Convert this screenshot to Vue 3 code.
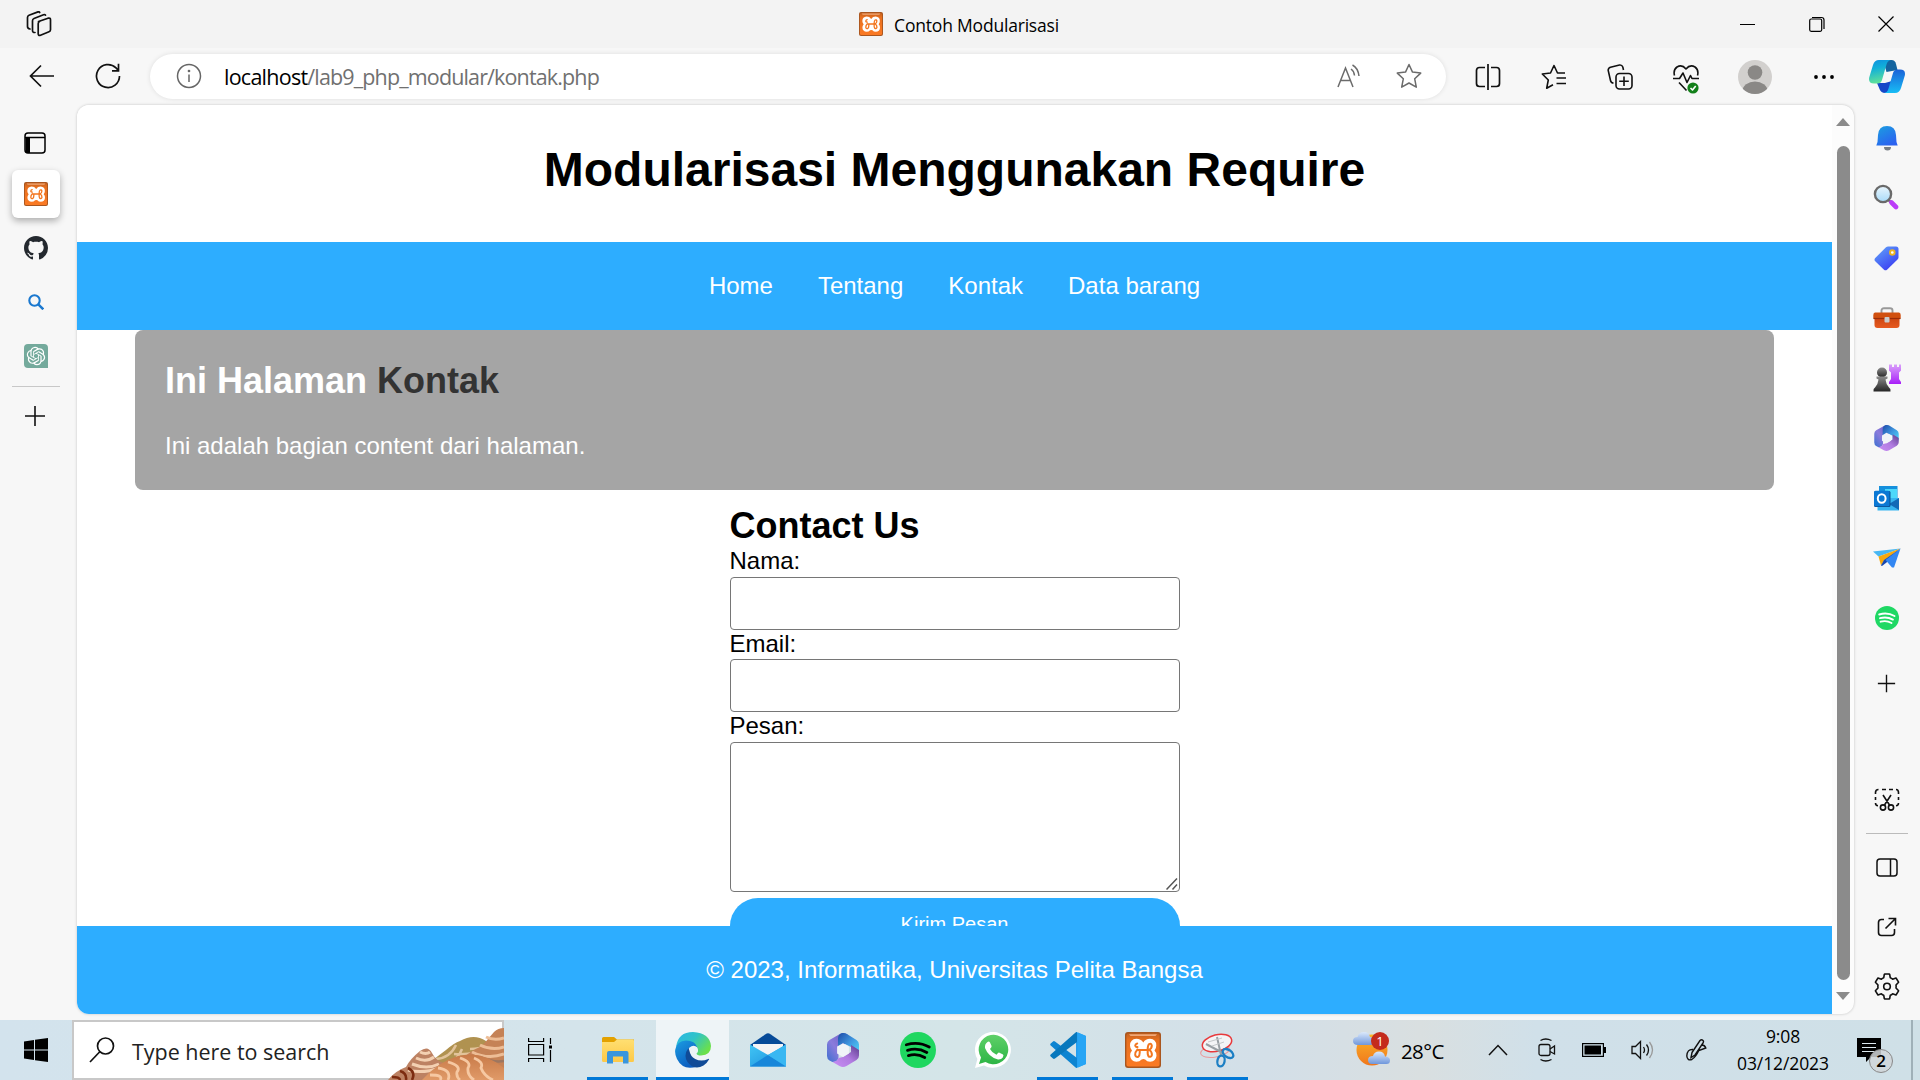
<script setup>
const navLinks = ['Home', 'Tentang', 'Kontak', 'Data barang']
</script>

<template>
  <div class="screen">
    <svg class="defs" width="0" height="0" aria-hidden="true">
      <defs>
        <linearGradient id="xg" x1="0" y1="0" x2="0" y2="1"><stop offset="0" stop-color="#c4611f" /><stop offset=".2" stop-color="#e8701f" /><stop offset="1" stop-color="#fb7a24" /></linearGradient>
        <linearGradient id="m1" x1="0" y1="1" x2="1" y2="0"><stop offset="0" stop-color="#3b6fd0" /><stop offset=".45" stop-color="#8a7bdc" /><stop offset="1" stop-color="#6a5cc0" /></linearGradient>
        <linearGradient id="m2" x1="0" y1="0" x2="1" y2="1"><stop offset="0" stop-color="#1d4aa8" /><stop offset=".5" stop-color="#3f98e0" /><stop offset="1" stop-color="#52e0fb" /></linearGradient>
        <linearGradient id="m3" x1="0" y1="1" x2="1" y2="0"><stop offset="0" stop-color="#c98df5" /><stop offset=".5" stop-color="#b07be0" /><stop offset="1" stop-color="#5a3c8c" /></linearGradient>
        <linearGradient id="e1" x1="0" y1="0" x2="1" y2=".6"><stop offset="0" stop-color="#2bb6e8" /><stop offset=".5" stop-color="#2fc3c8" /><stop offset="1" stop-color="#6be04a" /></linearGradient>
        <linearGradient id="e2" x1="0" y1="0" x2=".6" y2="1"><stop offset="0" stop-color="#1b9de2" /><stop offset="1" stop-color="#0a5cbf" /></linearGradient>
        <linearGradient id="bl" x1="0" y1="0" x2=".6" y2="1"><stop offset="0" stop-color="#1ba0e0" /><stop offset="1" stop-color="#2b62f0" /></linearGradient>
        <linearGradient id="tg" x1="0" y1="0" x2=".7" y2="1"><stop offset="0" stop-color="#62a8fa" /><stop offset="1" stop-color="#3a3cf2" /></linearGradient>
        <linearGradient id="pu" x1="0" y1="0" x2="0" y2="1"><stop offset="0" stop-color="#d9a0fa" /><stop offset="1" stop-color="#a81ef8" /></linearGradient>
        <linearGradient id="dk" x1="0" y1="0" x2="0" y2="1"><stop offset="0" stop-color="#8c8c8c" /><stop offset="1" stop-color="#262626" /></linearGradient>
        <linearGradient id="rd" x1="0" y1="0" x2="0" y2="1"><stop offset="0" stop-color="#c8430f" /><stop offset="1" stop-color="#e65a20" /></linearGradient>
        <linearGradient id="lens" x1="0" y1="0" x2="0" y2="1"><stop offset="0" stop-color="#eaf6fd" /><stop offset="1" stop-color="#a8daf8" /></linearGradient>
        <linearGradient id="c1" x1="0" y1="0" x2=".2" y2="1"><stop offset="0" stop-color="#0d8fe0" /><stop offset=".4" stop-color="#12b0d8" /><stop offset="1" stop-color="#5fe09a" /></linearGradient>
        <linearGradient id="c2" x1="0" y1="0" x2="0" y2="1"><stop offset="0" stop-color="#1a62d8" /><stop offset="1" stop-color="#18bdf5" /></linearGradient>
        <linearGradient id="wa" x1="0" y1="0" x2="0" y2="1"><stop offset="0" stop-color="#5fd068" /><stop offset="1" stop-color="#2db545" /></linearGradient>
        <linearGradient id="sun" x1="0" y1="0" x2="0" y2="1"><stop offset="0" stop-color="#f9b429" /><stop offset="1" stop-color="#f1771b" /></linearGradient>
        <linearGradient id="cl" x1="0" y1="0" x2="0" y2="1"><stop offset="0" stop-color="#dbe9fb" /><stop offset="1" stop-color="#6f97dc" /></linearGradient>
        <linearGradient id="dn" x1="0" y1="0" x2="0" y2="1"><stop offset="0" stop-color="#c87a48" /><stop offset="1" stop-color="#e09a68" /></linearGradient>
        <linearGradient id="fo" x1="0" y1="0" x2="0" y2="1"><stop offset="0" stop-color="#ffdf72" /><stop offset="1" stop-color="#fdc947" /></linearGradient>
        <linearGradient id="ml" x1="0" y1="0" x2="1" y2="1"><stop offset="0" stop-color="#41c5f5" /><stop offset="1" stop-color="#1c8fdc" /></linearGradient>
      </defs>
      <symbol id="xampp" viewBox="0 0 36 36">
        <rect width="36" height="36" rx="3" fill="#a9561f" />
        <rect x="1.4" y="1.4" width="33.2" height="33.2" rx="2.5" fill="url(#xg)" />
        <path d="M4 2.2h28l-1.500 1.900h-25z" fill="#f0a878" />
        <path d="M18.300 10.500Q20.500 6.800 25 6.800q6.300.4 6.300 6.700 0 3-1.800 5 2.300 2.200 2 5.300-.5 5.700-6.300 6-3.300 0-5-2.300-1.800-.8-3.600 0-1.900 2.300-5.200 2.300-5.800-.4-6.300-6-.2-3 1.900-5.300-2-2-2-5 .2-6.300 6.300-6.700 4.500 0 7 3.700z" fill="#fff" />
        <path d="M12.200 11.500q-2 .5-2 2.300.5 1.500 2.300 1.300M12.800 18h11M12.500 17.500q-2.500 2.500-2.300 5.500.7 2.500 3 1.800 1.500-1 1.500-4v-2.500M24 18q2.800-1.500 2.800-4.500-.8-2.500-2.600-1.500-1.400 1-1.600 5.500M22.700 18.500q-.3 4.500 1 6 2.500 1 3.200-1.500.2-3-2.400-5" fill="none" stroke="#f3761f" stroke-width="2" stroke-linecap="round" stroke-linejoin="round" />
      </symbol>
      <symbol id="m365" viewBox="0 0 32 34">
        <path d="M12 1.500 2.500 7Q0 8.500 0 11.500v11.500q0 3 2.500 4.500l3 1.500q5 0 6-4.500V14l9-4V1.500Q16-1 12 1.500z" fill="url(#m1)" />
        <path d="M15 0q-3.500 1-4 5v9l5-4 8 4v9l8-3V11.500q0-3-2.500-4.500L19.500.8Q17-.3 15 0z" fill="url(#m2)" />
        <path d="M32 17v5.500q0 3-2.500 4.500l-10 6q-3.500 2-7 0L5.500 29q5-.5 6-4l4.500-1 8-5v-7z" fill="url(#m3)" />
        <path d="M16 10.200l5.900 3.400v7L16 24l-5.900-3.400v-7z" fill="#f0f4f8" />
      </symbol>
      <symbol id="spot" viewBox="0 0 24 24"><path d="M4.200 8.500c5-1.500 10.800-1 15.300 1.500M5 12.200c4.300-1.300 9-.8 12.900 1.400M5.600 15.700c3.500-1 7.500-.7 10.900 1.300" fill="none" stroke-linecap="round" stroke-width="1.900" /></symbol>
      <symbol id="plus" viewBox="0 0 22 22"><path d="M11 1v20M1 11h20" stroke="#111" stroke-width="1.600" /></symbol>
    </svg>

    <header class="titlebar">
      <svg class="ws" width="26" height="26" viewBox="0 0 26 26" fill="none" stroke="#111" stroke-width="1.700" stroke-linejoin="round" stroke-linecap="round"><path d="M12.500 10.500 22 7.200q2.500-.5 2.500 1.500v10q0 1.500-1.500 2l-8.500 3.500q-2.300.8-2.300-1.500v-10q0-1.600 1.300-2.200z" /><path d="M9 21.500q-2.500.2-2.500-2V9.700q0-1.600 1.500-2.200l9.500-3.800q1.500-.4 2 .5M4 18q-2.500-.5-2.500-2.500V6.500Q1.500 5 3 4.300L12 .9q1.200-.3 1.700.6" /></svg>
      <div class="tabtitle"><svg width="24" height="24"><use href="#xampp" /></svg><span>Contoh Modularisasi</span></div>
      <div class="wincontrols">
        <svg width="16" height="16" viewBox="0 0 16 16"><path d="M0 8.500h15" stroke="#000" /></svg>
        <svg width="16" height="16" viewBox="0 0 16 16" fill="none" stroke="#000"><rect x=".7" y="3" width="12" height="12.300" rx="1.500" stroke-width="1.200" /><path d="M3 1.500h9.500q2.500 0 2.500 2.500V13" stroke-width="1.200" /></svg>
        <svg width="16" height="16" viewBox="0 0 16 16" stroke="#000" stroke-width="1.200"><path d="m.5.5 15 15m0-15-15 15" /></svg>
      </div>
    </header>

    <div class="toolbar">
      <div class="slot back"><svg width="26" height="24" viewBox="0 0 26 24" fill="none" stroke="#111" stroke-width="1.700"><path d="M12 1.500 1.500 12 12 22.500M1.500 12H25" /></svg></div>
      <div class="slot reload"><svg width="26" height="26" viewBox="0 0 26 26" fill="none" stroke="#111" stroke-width="1.700"><path d="M24.500 13A11.500 11.500 0 1 1 21 4.800L23.500 7.500M23.500.8v7H17" /></svg></div>
      <div class="address">
        <svg width="26" height="26" viewBox="0 0 26 26" fill="none" stroke="#666" stroke-width="1.500"><circle cx="13" cy="13" r="11.500" /><path d="M13 11.500v7.500" /><circle cx="13" cy="8" r=".6" fill="#666" /></svg>
        <div class="url"><b>localhost</b>/lab9_php_modular/kontak.php</div>
        <svg class="read" width="25" height="25" viewBox="0 0 25 25" fill="none" stroke="#6b6b6b" stroke-width="1.500"><path d="M1 23 8.500 4 16 23M3.800 16.500h9.500M14 5q3 2 3.500 6.500M15.500 1q5.500 3 6.500 11" /></svg>
        <svg width="26" height="26" viewBox="0 0 26 26" fill="none" stroke="#6b6b6b" stroke-width="1.500" stroke-linejoin="round"><path d="m13 1.500 3.500 7.600 8.200 1-6 5.700 1.600 8.400L13 20l-7.300 4.200 1.600-8.400-6-5.700 8.200-1z" /></svg>
      </div>
      <div class="actions">
        <div class="slot"><svg width="26" height="26" viewBox="0 0 26 26" fill="none" stroke="#111" stroke-width="1.700"><path d="M13 0v26M10 3.500H4.500Q1.500 3.500 1.500 6.500v13q0 3 3 3H10M16 3.500h5.500q3 0 3 3v13q0 3-3 3H16" /></svg></div>
        <div class="slot"><svg width="26" height="26" viewBox="0 0 26 26" fill="none" stroke="#111" stroke-width="1.600" stroke-linejoin="round"><path d="M24 9h-7.500L13 1.500 9.500 9 1.300 10l6 6-1.600 8.200 6.300-3.500M15.500 14H25M15.500 19.500H25" /></svg></div>
        <div class="slot"><svg width="26" height="26" viewBox="0 0 26 26" fill="none" stroke="#111" stroke-width="1.600"><rect x="9" y="9.500" width="16" height="15.500" rx="3.500" /><path d="M17 12.500v9.500M12.200 17.200h9.600M6.500 19Q4 19 3.500 16.500L1.200 6.500Q1 4 3.500 3.200L12.500 1q2.500-.3 3.300 2l.7 3" /></svg></div>
        <div class="slot heart"><svg width="26" height="30" viewBox="0 0 26 30" fill="none" stroke="#111" stroke-width="1.600" stroke-linejoin="round"><path d="M1.500 11.500Q0 6 4 3q5-3 9 2Q17 0 22 3q4 3 2.500 8.500M0 14.500h6.500L10 9l4 9.500 3.500-7 1.500 3h7M6 18.500l7.500 8" /><circle cx="20" cy="24" r="5.600" fill="#13801a" stroke="none" /><path d="m17.500 24 2 2 3.200-4" stroke="#fff" /></svg></div>
        <div class="slot avatar"><svg width="34" height="34" viewBox="0 0 34 34"><defs><clipPath id="av"><circle cx="17" cy="17" r="17" /></clipPath></defs><circle cx="17" cy="17" r="17" fill="#d2d0ce" /><g clip-path="url(#av)" fill="#8a8886"><circle cx="17" cy="12.500" r="7.300" /><ellipse cx="17" cy="31" rx="12.500" ry="9.500" /></g></svg></div>
        <div class="slot"><svg width="22" height="6" viewBox="0 0 22 6"><circle cx="3" cy="3" r="1.900" /><circle cx="11" cy="3" r="1.900" /><circle cx="19" cy="3" r="1.900" /></svg></div>
        <div class="slot copilot"><svg width="36" height="33" viewBox="0 0 36 33"><path d="M8 23h8l7-2-2 7q-1 5-5 5-4 0-5.500-4z" fill="#1747c8" /><path d="M14 0h8.500q3.500 0 4.500 4l1.500 6-11 2z" fill="#14649f" /><path d="M10 0h12q-3.500.5-4.500 4.500L13 20q-1 3.500-4.500 3.500H5q-6 0-4.800-6L4 5q1.500-5 6-5z" fill="url(#c1)" /><path d="M26 33H15q3.500-.5 4.500-4.500L24 13q1-3.500 4.500-3.500H31q6 0 4.800 6L32 28q-1.500 5-6 5z" fill="url(#c2)" /></svg></div>
      </div>
    </div>

    <div class="body">
      <aside class="tabs">
        <div class="slot pane"><svg width="22" height="22" viewBox="0 0 22 22" fill="none" stroke="#000" stroke-width="1.500"><rect x="1" y="1" width="20" height="20" rx="3" /><path d="M1 5.500h20" /><path d="M1.500 6h4.500v15H3q-1.500-.5-1.500-2z" fill="#000" stroke="none" /></svg></div>
        <div class="slot current"><svg width="24" height="24"><use href="#xampp" /></svg></div>
        <div class="slot"><svg width="24" height="24" viewBox="0 0 16 16" fill="#24292f"><path d="M8 0C3.580 0 0 3.580 0 8c0 3.540 2.290 6.530 5.470 7.590.4.070.55-.17.55-.38 0-.19-.01-.82-.01-1.490-2.010.37-2.530-.49-2.690-.94-.09-.23-.48-.94-.82-1.130-.28-.15-.68-.52-.01-.53.63-.01 1.080.58 1.230.82.72 1.210 1.870.87 2.330.66.070-.52.28-.87.510-1.070-1.780-.2-3.640-.89-3.640-3.950 0-.87.31-1.590.82-2.150-.08-.2-.36-1.020.08-2.120 0 0 .67-.21 2.200.82.640-.18 1.320-.27 2-.27s1.360.09 2 .27c1.530-1.040 2.200-.82 2.200-.82.440 1.100.16 1.920.08 2.120.51.56.82 1.270.82 2.150 0 3.070-1.870 3.750-3.650 3.950.29.25.54.73.54 1.480 0 1.070-.01 1.930-.01 2.200 0 .21.15.46.55.38A8.010 8.010 0 0 0 16 8c0-4.420-3.580-8-8-8z" /></svg></div>
        <div class="slot"><svg width="16" height="16" viewBox="0 0 16 16" fill="none" stroke="#1a78cf" stroke-width="2.100"><circle cx="6.500" cy="6.500" r="5.200" /><path d="m10.300 10.300 5 5" stroke-width="2.500" /></svg></div>
        <div class="slot"><svg width="24" height="24" viewBox="0 0 24 24"><path d="M4 0h16q4 0 4 4v20H4q-4 0-4-4V4q0-4 4-4z" fill="#74aa9c" /><g transform="translate(2.800 2.800) scale(.767)" fill="#fff"><path d="M22.282 9.821a5.985 5.985 0 0 0-.516-4.910 6.046 6.046 0 0 0-6.510-2.900A6.065 6.065 0 0 0 4.981 4.180a5.985 5.985 0 0 0-3.998 2.900 6.046 6.046 0 0 0 .743 7.097 5.980 5.980 0 0 0 .510 4.911 6.051 6.051 0 0 0 6.515 2.900A5.985 5.985 0 0 0 13.260 24a6.056 6.056 0 0 0 5.772-4.206 5.990 5.990 0 0 0 3.997-2.900 6.056 6.056 0 0 0-.747-7.073zM13.260 22.430a4.476 4.476 0 0 1-2.876-1.040l.141-.081 4.779-2.758a.795.795 0 0 0 .392-.681v-6.737l2.020 1.168a.071.071 0 0 1 .038.052v5.583a4.504 4.504 0 0 1-4.494 4.494zM3.600 18.304a4.470 4.470 0 0 1-.535-3.014l.142.085 4.783 2.759a.771.771 0 0 0 .780 0l5.843-3.369v2.332a.080.080 0 0 1-.033.062L9.740 19.950a4.500 4.500 0 0 1-6.140-1.646zM2.340 7.896a4.485 4.485 0 0 1 2.366-1.973V11.600a.766.766 0 0 0 .388.676l5.815 3.355-2.020 1.168a.076.076 0 0 1-.071 0l-4.830-2.786A4.504 4.504 0 0 1 2.340 7.872zm16.597 3.855l-5.833-3.387L15.119 7.200a.076.076 0 0 1 .071 0l4.830 2.791a4.494 4.494 0 0 1-.676 8.105v-5.678a.790.790 0 0 0-.407-.667zm2.010-3.023l-.141-.085-4.774-2.782a.776.776 0 0 0-.785 0L9.409 9.230V6.897a.066.066 0 0 1 .028-.061l4.830-2.787a4.500 4.500 0 0 1 6.680 4.660zm-12.640 4.135l-2.020-1.164a.080.080 0 0 1-.038-.057V6.075a4.500 4.500 0 0 1 7.375-3.453l-.142.080L8.704 5.460a.795.795 0 0 0-.393.681zm1.097-2.365l2.602-1.500 2.607 1.500v2.999l-2.597 1.500-2.607-1.500z" /></g></svg></div>
        <hr />
        <div class="slot"><svg width="22" height="22"><use href="#plus" /></svg></div>
      </aside>

      <div class="viewport">
        <div class="page">
          <div class="scrollarea">
            <h1>Modularisasi Menggunakan Require</h1>
            <nav><a v-for="l in navLinks" :key="l">{{ l }}</a></nav>
            <section class="content">
              <h2>Ini Halaman <span>Kontak</span></h2>
              <p>Ini adalah bagian content dari halaman.</p>
            </section>
            <form class="contact" @submit.prevent>
              <h2>Contact Us</h2>
              <label class="first">Nama:</label>
              <input type="text" />
              <label>Email:</label>
              <input type="email" />
              <label>Pesan:</label>
              <div class="area"><textarea></textarea><svg width="12" height="12" viewBox="0 0 12 12" stroke="#555" stroke-width="1.500"><path d="M.5 11.500 11 .5M6.500 11.500l4.500-5" /></svg></div>
              <button type="submit">Kirim Pesan</button>
            </form>
          </div>
          <footer>© 2023, Informatika, Universitas Pelita Bangsa</footer>
        </div>
        <div class="scrollbar"><i class="up"></i><div class="thumb"></div><i class="down"></i></div>
      </div>

      <aside class="side">
        <div class="slot bell"><svg width="22" height="26" viewBox="0 0 22 26"><path d="M8 21h7q0 3.500-3.500 3.500T8 21z" fill="#777d85" /><path d="M11 0q8.500 0 9 9l.5 7 1.200 3.500H.3L1.500 16 2 9q.5-9 9-9z" fill="url(#bl)" /></svg></div>
        <div class="slot lens"><svg width="26" height="26" viewBox="0 0 26 26"><path d="m14.500 15 3 3" stroke="#777" stroke-width="2.500" /><circle cx="10" cy="10" r="8.100" fill="url(#lens)" stroke="#6a6a6a" stroke-width="2.400" /><path d="m18.500 18.500 4.500 4.500" stroke="#bb3cf8" stroke-width="4.600" stroke-linecap="round" /></svg></div>
        <div class="slot"><svg width="25" height="25" viewBox="0 0 25 25"><path d="M14 .5h8q2.500 0 2.500 2.500v8.500q0 1-1 2L13 23.700q-1.500 1.300-3 0L1 15q-1-1.300 0-2.700L12 1.200Q13 .5 14 .5z" fill="url(#tg)" /><circle cx="18.300" cy="6.500" r="2.300" fill="#fff" stroke="#eeb320" stroke-width="1.900" /></svg></div>
        <div class="slot"><svg width="28" height="22" viewBox="0 0 28 22"><path d="M8.500 6V3.500Q8.500 1.300 11 1.300h6q2.500 0 2.500 2.200V6" fill="none" stroke="#999" stroke-width="1.900" /><path d="M1.500 9h25v9q0 3-3 3h-19q-3 0-3-3z" fill="url(#rd)" /><path d="M2 5.500h24q1.700 0 1.700 2.500v3.500H.3V8Q.3 5.500 2 5.500z" fill="#d1500f" /><path d="M.5 11.500h27" stroke="#9a2c08" stroke-width="1.200" /><rect x="11.500" y="10" width="5" height="5.500" rx="1" fill="#c9cccd" /></svg></div>
        <div class="slot"><svg width="28" height="28" viewBox="0 0 28 28"><path d="M16 .5h3V3h2V.5h3V3h2V.5h2v6l-2 2v6.500l2 3V20H16v-2l2-3V8.500l-2-2z" fill="url(#pu)" /><circle cx="9" cy="8.500" r="5" fill="url(#dk)" /><path d="M3.500 12.500h11v2l-2 1q.5 5 3.500 8 2 1 1.500 4h-17q-.5-3 1.500-4 3-3 3.500-8l-2-1z" fill="url(#dk)" /></svg></div>
        <div class="slot"><svg width="25" height="26"><use href="#m365" /></svg></div>
        <div class="slot"><svg width="25" height="25" viewBox="0 0 25 25"><rect x="5" y="0" width="18.500" height="14" fill="#1590dd" /><path d="M11 3h12v9H11z" fill="#4ed8fa" /><path d="M3.500 12H25v12.500H3.500z" fill="#37b4f0" /><path d="M25 12 15 18l10 6z" fill="#1369b7" /><rect x="0" y="5" width="16.500" height="16" rx="1.500" fill="#0b4e91" /><rect x="0" y="4.800" width="15.500" height="15.500" rx="1.500" fill="#0b78d4" /><ellipse cx="7.700" cy="12.500" rx="3.900" ry="4.200" fill="none" stroke="#fff" stroke-width="2" /></svg></div>
        <div class="slot"><svg width="28" height="20" viewBox="0 0 28 20"><path d="M27.500.5 0 3.500l5.500 5z" fill="#48b7f2" /><path d="M27.500.5 5.500 8.500l2.500 9 3-5z" fill="#f5a80d" /><path d="M27.500.5 11 12l-3 5.500 1 .5 4.500-3.500z" fill="#1848b0" /><path d="M27.500.5 12.500 12 19 19.500h2z" fill="#3387f2" /></svg></div>
        <div class="slot"><svg width="24" height="24"><circle cx="12" cy="12" r="12" fill="#1fd864" /><use href="#spot" stroke="#fff" /></svg></div>
        <div class="slot tall"><svg width="19" height="19"><use href="#plus" /></svg></div>
        <div class="lower">
          <div class="slot"><svg width="26" height="23" viewBox="0 0 26 23" fill="none" stroke="#111" stroke-width="1.600"><path d="M1.500 6V4.500q0-3 3-3M8 1.500h4M15 1.500h4M22 1.500q2.500 0 2.500 3V6M24.500 9v3M24.500 15q0 2.500-2.500 2.800M1.500 9v3M1.500 15q0 2.500 2.500 2.800M9 7l6.500 10M17 7l-6.500 10" /><circle cx="9" cy="19.500" r="2.600" /><circle cx="17" cy="19.500" r="2.600" /></svg></div>
          <hr />
          <div class="slot"><svg width="22" height="19" viewBox="0 0 22 19" fill="none" stroke="#111" stroke-width="1.500"><rect x="1" y="1" width="20" height="17" rx="3" /><path d="M14.500 1v17" /></svg></div>
          <div class="slot"><svg width="20" height="20" viewBox="0 0 20 20" fill="none" stroke="#111" stroke-width="1.600"><path d="M7 2.500H4.500q-3 0-3 3v10q0 3 3 3h10q3 0 3-3V12M11.500 1.500h7v7M18.500 1.500 8.500 11.500" /></svg></div>
          <div class="slot gear"><svg width="26" height="27" viewBox="0 0 26 27" fill="none" stroke="#111" stroke-width="1.600" stroke-linejoin="round"><path d="m10.300 1.500.7-.5h4l.7.500.6 3.300q1.300.5 2.300 1.400l3.400-1.200 2.600 4.200-2.600 2.800q.3 1.500 0 3l2.600 2.800-2.600 4.200-3.400-1.200q-1 .9-2.300 1.400l-.6 3.300-.7.500h-4l-.7-.5-.6-3.300q-1.300-.5-2.300-1.400L4 22l-2.600-4.200L4 15q-.3-1.500 0-3L1.400 9.200 4 5l3.400 1.200q1-.9 2.300-1.400z" /><circle cx="13" cy="13.500" r="3.300" /></svg></div>
        </div>
      </aside>
    </div>

    <div class="taskbar">
      <div class="start"><svg width="24" height="24" viewBox="0 0 24 24"><path d="M0 3.500 10 2v9.500H0zM11 1.800 24 0v11.500H11zM0 12.500h10V22L0 20.500zM11 12.500h13V24l-13-1.800z" /></svg></div>
      <div class="search">
        <svg width="26" height="26" viewBox="0 0 26 26" fill="none" stroke="#111" stroke-width="1.700"><circle cx="16.500" cy="9" r="8" /><path d="M11 14.500 1 25" /></svg>
        <span>Type here to search</span>
        <svg class="dune" width="116" height="52" viewBox="0 0 116 52"><path d="M42 34 58 22q8-7 14-9 14-8 26 0l10 39H34z" fill="#b09250" /><path d="M48 31q14-1 20-14M56 37q14-4 18-16M66 26q20 2 34-8M82 21q10 0 20-5" stroke="#e2c39a" stroke-width="2.500" fill="none" /><path d="M62 50Q70 28 94 18L106 4q4-4 10-4v52H60z" fill="#c58256" /><path d="M84 24q16 8 32 2M92 17q12 6 24 2M98 9q8 4 18 1" stroke="#edbd96" stroke-width="3" fill="none" /><path d="M92 29q14 6 24 4" stroke="#9d7660" stroke-width="2.500" fill="none" /><path d="M0 52q7-9 18-13 4-8 14-16 8-6 12 2 4 8 12 10l-6 17z" fill="#bd8263" /><path d="M28 30q10 5 18-1M24 36q15 6 27 0M32 24q6 3 10 0M20 42q14 4 32-2" stroke="#f3d0b2" stroke-width="3" fill="none" /><path d="M4 49q8 0 8 3M12 43q7 2 6 9M20 40q8 4 4 12" stroke="#7c2c10" stroke-width="2.600" fill="none" /><path d="M34 52Q50 34 70 28q24-6 46 12v12z" fill="url(#dn)" /><path d="M42 47q14 0 10 5M50 40q14 2 10 12M60 34q14 4 9 10-1 5 3 8M72 30q12 4 8 10-1 7 6 12M86 30q10 4 7 10 3 8 12 12" stroke="#f6c8a2" stroke-width="2.800" fill="none" /></svg>
      </div>
      <div class="app view"><svg width="24" height="24" viewBox="0 0 24 24" fill="none" stroke="#000" stroke-width="1.200"><path d="M.6 0v3.500h15V0M.6 24v-3.500h15V24M.6 6.500h15v10.500h-15zM22.500 0v6M22.500 12v12" /><path d="M21 7.500h3v3h-3z" fill="#000" stroke="none" /></svg></div>
      <div class="app on"><svg width="32" height="27" viewBox="0 0 32 27"><path d="M0 1.500Q0 0 1.500 0H12l3 2.500H32V8H0z" fill="#e3a100" /><path d="M0 5h12l3-2.500h15.500Q32 2.500 32 4v19.500q0 1.500-1.500 1.500h-29Q0 25 0 23.500z" fill="url(#fo)" /><path d="M5 26.500V16q0-2 2-2h17.500q2 0 2 2v10.500h-5.500v-7H11v7z" fill="#3a96dd" /></svg></div>
      <div class="app on active"><svg width="36" height="36" viewBox="0 0 36 36"><path d="M1 15Q3 0 18 0q17 1 18 14 0 9-10 9.500-4 0-4.500-2 2.500-2 1-5.500Q20 9.500 11 10 5 10 1 15z" fill="url(#e1)" /><path d="M.3 17.500Q2 9 11 8.500q9 0 11.500 7-4-3.500-8 0-3.500 4-1.500 10 2 6.500 9 9Q8 39 2 27-.5 22 .3 17.500z" fill="url(#e2)" /><path d="M13.500 16Q8 23 12.500 30q7 9 16 3.500 4-3 5.500-6 .5-1-.8-.6-7 3-13 0-5-3-5.700-8z" fill="#104b97" /></svg></div>
      <div class="app"><svg width="36" height="34" viewBox="0 0 36 34"><path d="M0 12 15.500 1.200q2.500-1.700 5 0L36 12v4H0z" fill="#064a98" /><path d="M3 11h30v10H3z" fill="#f3f3f5" /><path d="M0 11.500 18 22l18-10.500V33.500H0z" fill="url(#ml)" /><path d="M0 33.500 18 22l18 11.500z" fill="#1787da" /><path d="M18 22 36 11.500v22z" fill="#39b7f2" /></svg></div>
      <div class="app"><svg width="32" height="34"><use href="#m365" /></svg></div>
      <div class="app"><svg width="36" height="36"><circle cx="18" cy="18" r="18" fill="#1fd760" /><use href="#spot" stroke="#000" /></svg></div>
      <div class="app"><svg width="36" height="36" viewBox="0 0 36 36"><path d="M0 36 2.400 27A18 18 0 1 1 9 33.500z" fill="#fff" /><path d="M4 32 6 25.500A14.800 14.800 0 1 1 10.500 30z" fill="url(#wa)" /><path d="M12.500 10q1.500-1 2.500.5l1.600 3.500q.3.800-1.600 3 2 4 6.500 5.800 2-2.500 2.500-2.200l4 2q1 .7-.2 3-1.500 2.200-4.800 2Q13.500 25 10 16q-.5-4 2.500-6z" fill="#fff" /></svg></div>
      <div class="app on"><svg width="36" height="36" viewBox="0 0 36 36"><path d="M26 0l10 4v28l-10 4z" fill="#229df0" /><path d="M.7 11.500 3 9.400q1-.6 2 .1L27 26v10q-1 0-2-1L.7 13.500q-1-1 0-2z" fill="#0d84d1" /><path d="M.7 24.500 3 26.600q1 .6 2-.1L27 10V0q-1 0-2 1L.7 22.500q-1 1 0 2z" fill="#0878bd" /><path d="M25 35q1 1 2.500.8L36 32V4L27.500.2v35.600z" fill="#27a5f5" /></svg></div>
      <div class="app on"><svg width="36" height="36"><use href="#xampp" /></svg></div>
      <div class="app on"><svg width="36" height="36" viewBox="0 0 36 36" fill="none"><ellipse cx="15" cy="19" rx="14.500" ry="6" stroke="#ec9698" transform="rotate(-10 15 19)" /><ellipse cx="17" cy="11" rx="15" ry="8.300" fill="#f4f4f6" stroke="#e8393c" stroke-width="1.500" transform="rotate(-14 17 11)" /><path d="m17 5 4 18M6 12l17 9" stroke="#999fa4" stroke-width="2" /><path d="M8 10 22 6M12 14l12-4" stroke="#c5c8ca" /><ellipse cx="28" cy="21.500" rx="6" ry="3.600" stroke="#1c7fc4" stroke-width="2.300" transform="rotate(35 28 21.500)" /><ellipse cx="21" cy="29" rx="3.600" ry="5.500" stroke="#1c7fc4" stroke-width="2.300" transform="rotate(12 21 29)" /></svg></div>

      <div class="tray">
        <div class="weather"><svg width="38" height="36" viewBox="0 0 38 36"><circle cx="19" cy="18" r="15.500" fill="url(#sun)" /><path d="M5 13q-5 0-5-4t4.500-4Q6 0 11 0q5 0 6 5 4 .3 4 4t-4 4z" fill="url(#cl)" /><path d="M19 32q-4 0-4-4t5-4q1-4.500 6-4.500 5 0 6 5 5 .3 5 4t-4 3.500z" fill="url(#cl)" /></svg><span class="badge">1</span><span class="temp">28°C</span></div>
        <svg class="chev" width="20" height="12" viewBox="0 0 20 12" fill="none" stroke="#111" stroke-width="1.500"><path d="m1 11 9-9.500 9 9.500" /></svg>
        <svg class="meet" width="18" height="24" viewBox="0 0 18 24" fill="none" stroke="#111" stroke-width="1.300"><rect x="1" y="6.500" width="11" height="11" rx="2" /><path d="m12 11 4.500-3v8L12 13.500M2.500 2.500q5-3 11 0M2.500 21.500q5 3 11 0" /></svg>
        <svg class="batt" width="24" height="14" viewBox="0 0 24 14"><rect x=".6" y=".6" width="20.800" height="12.800" fill="none" stroke="#000" stroke-width="1.200" /><path d="M2.500 2.500h16.500v9H2.500zM22 4h2v6h-2z" /></svg>
        <svg class="vol" width="24" height="20" viewBox="0 0 24 20" fill="none" stroke="#111" stroke-width="1.300"><path d="M1 6.500h3.500L9.500 1.500v17L4.500 13.500H1zM12.500 7q2 3 0 6M15.500 4.500q4 5.500 0 11" /><path d="M18.500 2q6 8 0 16" stroke="#999" /></svg>
        <svg class="pen" width="21" height="22" viewBox="0 0 21 22" fill="none" stroke="#111" stroke-width="1.400"><path d="m6 13.500 8-12q1.500-1.500 3 0 1 1 0 2.500L9 16l-4 2.500zM7 10.500Q1 10 .8 17q.5 5 5 3.500 4-2.500 7-9l7-2.500q-1-3-4-3" /></svg>
        <div class="clock"><span>9:08</span><span>03/12/2023</span></div>
        <div class="notif"><svg width="24" height="24" viewBox="0 0 24 24"><path d="M0 0h24v19H14l-5 5v-5H0z" /><path d="M5 5.500h14M5 9.500h14M5 13.500h14" stroke="#dce8ee" stroke-width="1.200" /></svg><b>2</b></div>
      </div>
    </div>
  </div>
</template>

<style>
body { overflow: hidden; }
</style>

<style scoped>
.screen { width: 1920px; height: 1080px; display: flex; flex-direction: column; background: #f7f7f7; font-family: "Open Sans", "Noto Sans", sans-serif; color: #000; overflow: hidden; }
.screen * { box-sizing: border-box; }
svg { display: block; flex: none; }
.defs { position: absolute; }
.slot { display: flex; align-items: center; justify-content: center; flex: none; }

.titlebar { height: 48px; flex: none; background: #f3f3f3; display: flex; align-items: center; justify-content: space-between; padding: 0 26px; }
.ws { margin-right: 126px; }
.tabtitle { display: flex; align-items: center; gap: 11px; font-size: 17.500px; letter-spacing: -.2px; white-space: nowrap; }
.tabtitle span { padding-top: 2px; }
.wincontrols { display: flex; gap: 53px; }

.toolbar { height: 57px; flex: none; display: flex; }
.back { width: 84px; height: 56px; }
.reload { width: 47px; height: 56px; margin-right: 19px; }
.address { width: 1296px; height: 45px; margin-top: 6px; border-radius: 23px; background: #fff; box-shadow: 0 0 5px rgba(0,0,0,.1); display: flex; align-items: center; padding: 0 24px 0 26px; }
.address svg { position: relative; top: -.5px; }
.url { flex: 1; margin-left: 22px; font-size: 21.500px; letter-spacing: -.86px; color: #707070; white-space: nowrap; padding-bottom: 1px; }
.url b { font-weight: 400; color: #000; letter-spacing: -.75px; }
.read { margin-right: 34px; }
.actions { display: flex; margin-left: 8.500px; height: 57px; }
.actions .slot { width: 66px; }
.actions .heart { padding-top: 4px; }
.actions .avatar { width: 72px; }
.actions .copilot { width: 61px; }

.body { height: 915px; flex: none; display: flex; }
.tabs { width: 77px; padding: 10px 0 0 12px; }
.tabs .slot { width: 48px; height: 54px; }
.tabs .pane { height: 55px; padding-right: 2px; }
.tabs .current { height: 48px; margin-bottom: 3px; background: #fff; border-radius: 6px; box-shadow: 0 3px 7px rgba(0,0,0,.3); }
.tabs hr { width: 48px; height: 1px; border: 0; margin: 3px 0 0; background: #c8c8c8; }
.tabs .slot:last-child { height: 58px; padding-right: 2px; }

.viewport { width: 1777px; height: 909px; display: flex; background: #fcfcfc; border-radius: 12px; overflow: hidden; box-shadow: 0 0 3px rgba(0,0,0,.22); }
.page { width: 1755px; flex: none; background: #fff; font-family: "Liberation Sans", Arial, sans-serif; font-size: 24px; }
.scrollarea { height: 821px; overflow: hidden; }
h1 { height: 137px; margin: 0; padding-top: 37px; font-size: 48px; line-height: 56px; text-align: center; }
nav { height: 88px; background: #2dadff; display: flex; justify-content: center; align-items: center; gap: 45px; color: #fff; }
.content { width: 1639px; height: 160px; margin: 0 auto; background: #a5a5a5; border-radius: 8px; padding: 30px; color: #fff; }
.content h2 { margin: 0 0 24px; font-size: 36px; line-height: 41px; }
.content h2 span { color: #333; }
.content p { margin: 0; line-height: 42px; }
.contact { width: 450px; margin: 15px auto 0; display: flex; flex-direction: column; }
.contact h2 { margin: 0 0 1px; font-size: 36px; line-height: 41px; }
label { line-height: 28px; height: 28px; }
label.first { margin-bottom: 1px; }
input { height: 53px; border: 1px solid #767676; border-radius: 4px; padding: 0; background: #fff; margin: 1px 0 0; outline: 0; }
.area { position: relative; height: 150px; margin-top: 2px; }
textarea { display: block; width: 100%; height: 150px; border: 1px solid #767676; border-radius: 4px; resize: none; background: #fff; outline: 0; }
.area svg { position: absolute; right: 2px; bottom: 2px; }
.contact button { margin-top: 6px; height: 63px; flex: none; border: 0; border-radius: 28px; background: #2dadff; color: #fff; font: 20px "Liberation Sans", Arial, sans-serif; padding: 0 0 11px; }
footer { height: 88px; background: #2dadff; color: #fff; display: flex; align-items: center; justify-content: center; }
.scrollbar { width: 22px; display: flex; flex-direction: column; align-items: center; padding: 13px 0 10px 0; }
.scrollbar i { width: 0; height: 0; border: 7.500px solid transparent; border-top-width: 0; border-bottom: 8px solid #8b8b8b; }
.scrollbar .down { border-top: 8px solid #8b8b8b; border-bottom-width: 0; margin: 12px 0 4px; }
.thumb { width: 13px; flex: 1; margin-top: 20px; border-radius: 7px; background: #8b8b8b; }

.side { width: 66px; padding: 3px 1px 0 0; display: flex; flex-direction: column; }
.side .slot { height: 60px; }
.side .bell { padding-top: 2px; }
.side .lens { padding: 0 2px 2px 0; }
.side .tall { height: 70px; padding-right: 1px; }
.side .gear { padding-bottom: 1px; }
.lower { margin-top: 51px; }
.side hr { width: 42px; height: 1px; border: 0; margin: 4px auto 3px; background: #bbb; }

.taskbar { height: 60px; flex: none; display: flex; background: linear-gradient(90deg, #d3e3ed 0, #d4e4eb 30%, #d4e5e8 50%, #d3dfe8 66%, #d9dfe0 74%, #d0e0e9 80%, #cfe0e7 100%); }
.start { width: 72px; display: flex; align-items: center; justify-content: center; }
.search { width: 432px; height: 60px; background: #fff; border: 2px solid #c8c8c8; display: flex; align-items: center; padding-left: 15px; position: relative; font-size: 21.500px; letter-spacing: -.02px; color: #222; white-space: nowrap; }
.search span { margin-left: 17px; padding-top: 3px; }
.dune { position: absolute; right: -2px; bottom: -2px; }
.app { width: 61px; margin: 0 7px; display: flex; align-items: center; justify-content: center; border-bottom: 3px solid transparent; padding-top: 3px; flex: none; }
.app.view { margin-left: 8px; padding-right: 5px; }
.app.on { border-bottom-color: #0078d7; }
.app.active { width: 73px; margin: 0 1px; background: #eef4f7; }
.tray { margin-left: 98px; display: flex; align-items: center; position: relative; flex: none; }
.weather { display: flex; align-items: center; width: 135px; position: relative; }
.temp { margin-left: 10px; font-size: 20.500px; letter-spacing: -.6px; padding-top: 1px; }
.badge { position: absolute; left: 18px; top: 0; width: 18px; height: 18px; border-radius: 9px; background: #c42b1c; color: #fff; font-size: 13px; line-height: 18px; text-align: center; }
.meet { margin-left: 30px; }
.batt { margin-left: 26px; }
.vol { margin-left: 25px; }
.pen { margin-left: 31px; }
.clock { width: 96px; margin-left: 28px; display: flex; flex-direction: column; align-items: center; font-size: 17.500px; line-height: 27px; letter-spacing: -.1px; white-space: nowrap; }
.notif { margin-left: 26px; width: 56px; height: 60px; padding-top: 18px; position: relative; border-right: 2px solid #9fb0b8; }
.notif b { position: absolute; left: 12px; top: 29px; width: 24px; height: 24px; border: 1px solid #888; border-radius: 12px; background: rgba(208,213,216,.85); font-size: 17px; font-weight: 600; line-height: 22px; text-align: center; }
</style>
